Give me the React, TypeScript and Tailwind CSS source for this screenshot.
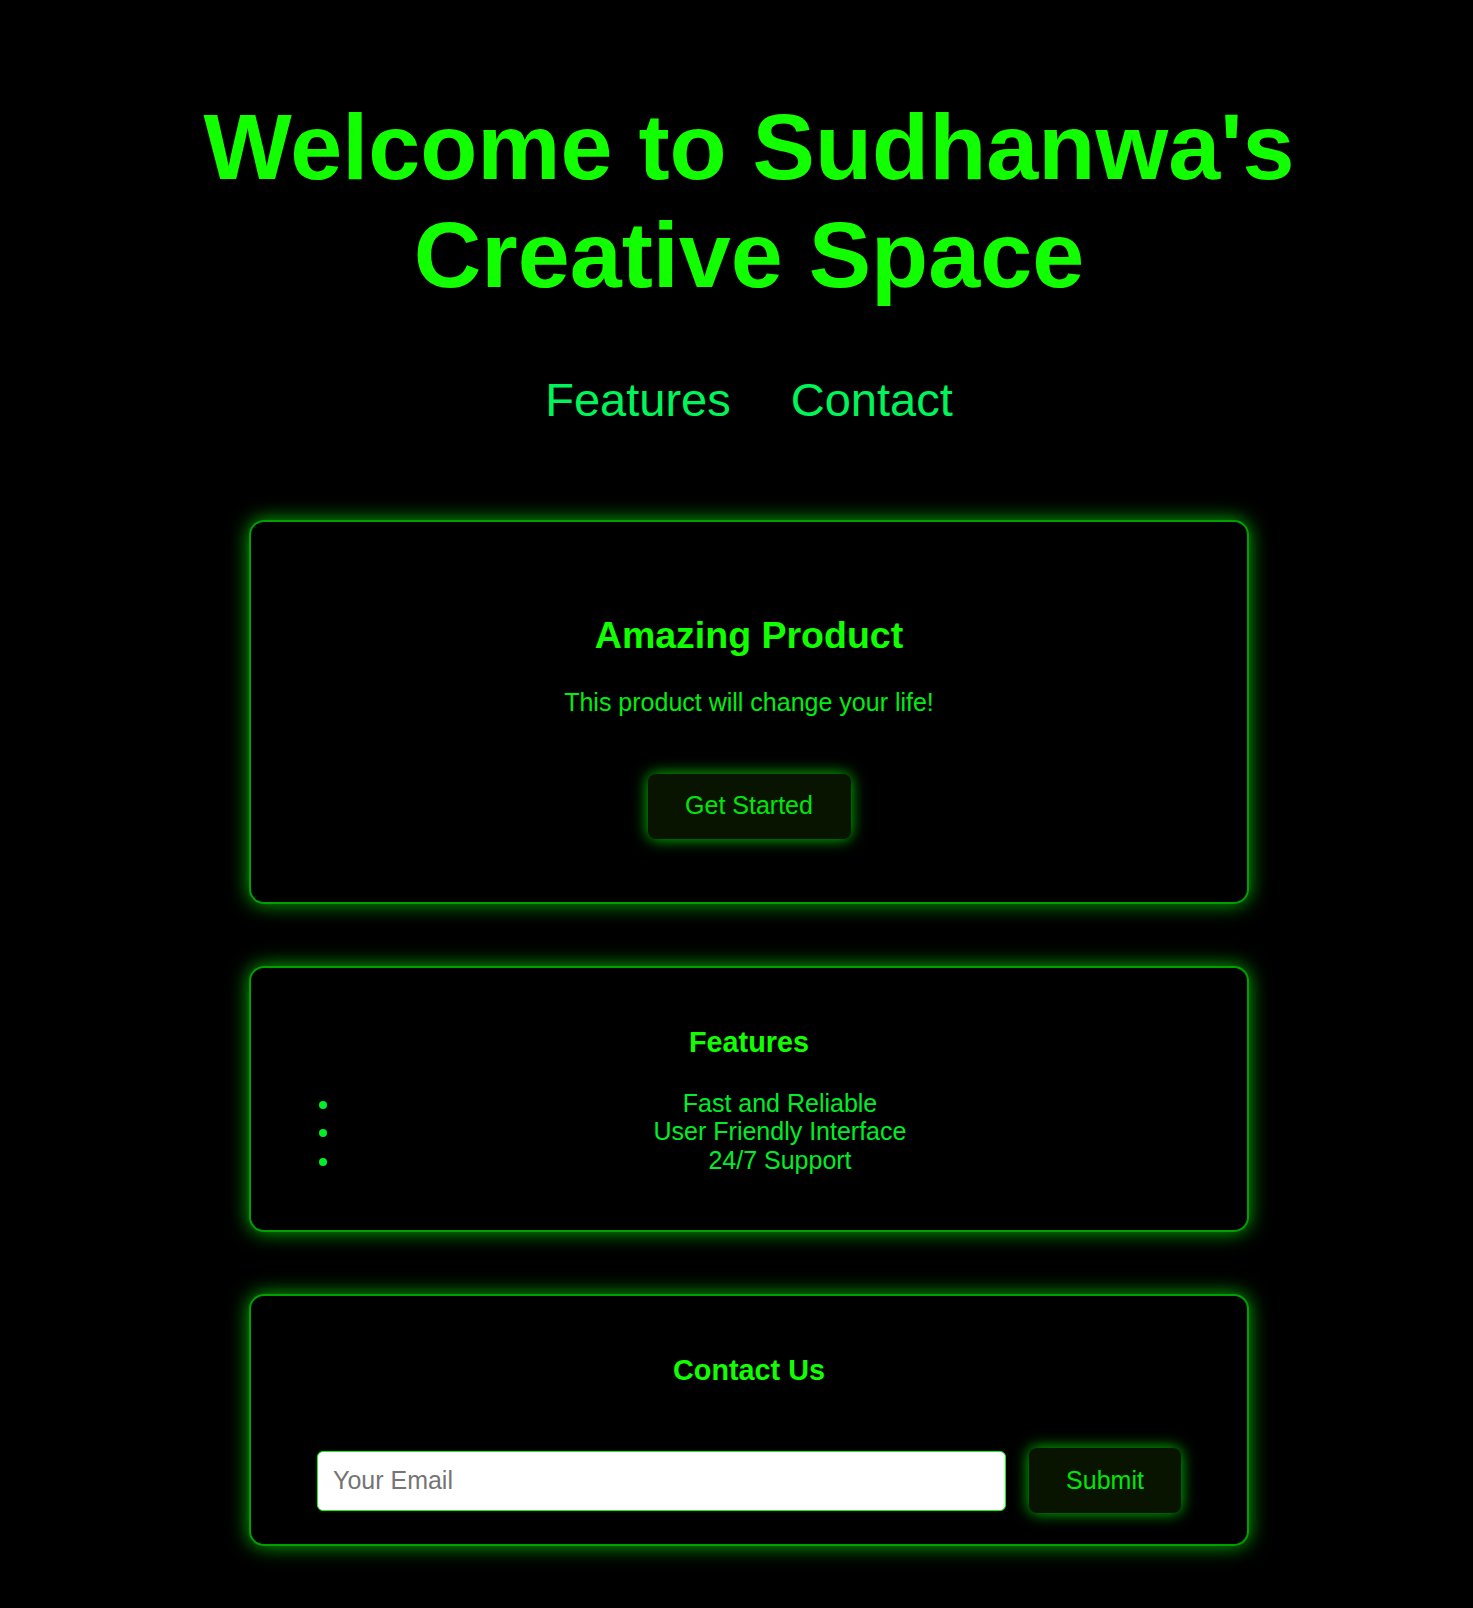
import React from "react";

const glowCard =
  "w-[1000px] mx-auto rounded-[15px] border-2 border-[#00a000] bg-black px-[28px] shadow-[0_0_20px_rgba(0,255,0,0.7)]";

const glowButton =
  "rounded-[8px] bg-[#081400] text-[25px] text-[#00e60a] shadow-[0_0_15px_rgba(0,255,0,0.8)]";

export default function App() {
  return (
    <div className="min-h-screen bg-black pl-[25px] pb-[63px] font-['Liberation_Sans',Arial,sans-serif]">
      {/* Header */}
      <header className="pt-[93px] text-center">
        <h1 className="text-[93.5px] leading-[108px] font-bold text-[#11ff00]">
          Welcome to Sudhanwa's
          <br />
          Creative Space
        </h1>
        <nav className="mt-[64px] flex justify-center gap-[60px] text-[47px] leading-[54px] text-[#00f55a]">
          <a href="#features">Features</a>
          <a href="#contact">Contact</a>
        </nav>
      </header>

      <main className="mt-[93px] flex flex-col gap-[62px]">
        {/* Hero card */}
        <section className={`${glowCard} pt-[92px] pb-[63px] text-center`}>
          <h2 className="text-[37.5px] leading-[43px] font-bold text-[#11ff00]">
            Amazing Product
          </h2>
          <p className="mt-[31px] text-[25px] leading-[28.6px] text-[#00ee10]">
            This product will change your life!
          </p>
          <button className={`${glowButton} mt-[57px] h-[65px] w-[203px]`}>
            Get Started
          </button>
        </section>

        {/* Features */}
        <section id="features" className={`${glowCard} pt-[58px] pb-[55px] text-center`}>
          <h3 className="text-[28.8px] leading-[33px] font-bold text-[#11ff00]">
            Features
          </h3>
          <ul className="mt-[30px] list-disc list-outside pl-[62px] text-[25px] leading-[28.8px] text-[#00ee28] marker:text-[#00ee28]">
            <li>Fast and Reliable</li>
            <li>User Friendly Interface</li>
            <li>24/7 Support</li>
          </ul>
        </section>

        {/* Contact */}
        <section id="contact" className={`${glowCard} pt-[58px] pb-[31px] text-center`}>
          <h3 className="text-[28.8px] leading-[33px] font-bold text-[#11ff00]">
            Contact Us
          </h3>
          <form
            className="mx-[38px] mt-[61.5px] flex items-center gap-[23px]"
            onSubmit={(e) => e.preventDefault()}
          >
            <input
              type="email"
              placeholder="Your Email"
              className="h-[60px] flex-1 rounded-[6px] border border-[#00ff00] bg-white px-[15px] text-[25px] text-black placeholder:text-[#757575] outline-none"
            />
            <button type="submit" className={`${glowButton} h-[65px] w-[152px]`}>
              Submit
            </button>
          </form>
        </section>
      </main>
    </div>
  );
}
